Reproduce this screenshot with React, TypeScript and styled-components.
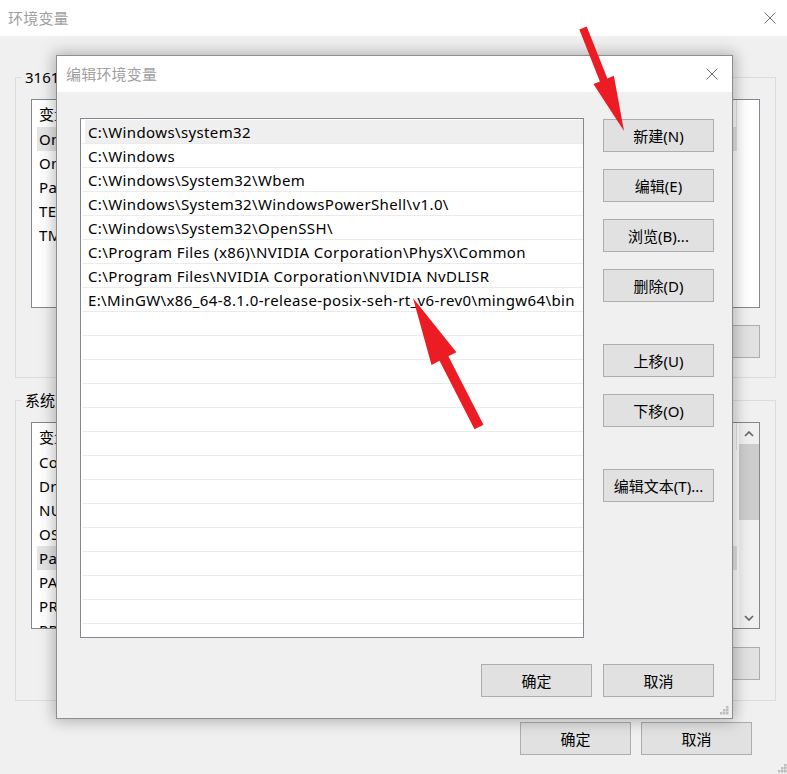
import React from "react";
import styled, { createGlobalStyle } from "styled-components";

const UI_FONT = `"Noto Sans", "Noto Sans CJK SC", sans-serif`;

const GlobalStyle = createGlobalStyle`
  html, body { margin: 0; padding: 0; }
  body {
    width: 787px;
    height: 774px;
    overflow: hidden;
    background: #f0f0f0;
    font-family: ${UI_FONT};
    font-size: 15px;
    color: #000;
  }
  * { box-sizing: border-box; }
`;

/* ---------- shared window parts ---------- */

const TitleBar = styled.div<{ $padL: number; $padR: number }>`
  height: 36px;
  flex: none;
  background: #fff;
  display: flex;
  align-items: center;
  justify-content: space-between;
  padding: 0 ${(p) => p.$padR}px 0 ${(p) => p.$padL}px;
`;

const TitleText = styled.span`
  font-size: 15px;
  line-height: 20px;
  color: #a0a0a0;
  letter-spacing: 0.2px;
`;

const CloseIcon = () => (
  <svg width="12" height="12" viewBox="0 0 12 12">
    <path d="M0.5 0.5 L11.5 11.5 M11.5 0.5 L0.5 11.5" stroke="#6e6e6e" strokeWidth="1" fill="none" />
  </svg>
);

const Button = styled.button<{ $mt?: number }>`
  width: 111px;
  height: 33px;
  flex: none;
  margin: ${(p) => p.$mt ?? 0}px 0 0 0;
  padding: 0;
  background: #e1e1e1;
  border: 1px solid #adadad;
  font-family: ${UI_FONT};
  font-size: 15px;
  line-height: 20px;
  color: #000;
  display: flex;
  align-items: center;
  justify-content: center;
`;

const GripBox = styled.svg<{ $right: number; $bottom: number }>`
  position: absolute;
  right: ${(p) => p.$right}px;
  bottom: ${(p) => p.$bottom}px;
`;

const Grip = ({ right, bottom }: { right: number; bottom: number }) => (
  <GripBox $right={right} $bottom={bottom} width="10" height="10" viewBox="0 0 10 10">
    {[
      [7, 1],
      [4, 4],
      [7, 4],
      [1, 7],
      [4, 7],
      [7, 7],
    ].map(([x, y], i) => (
      <rect key={i} x={x} y={y} width="2.5" height="2.5" fill="#bdbdbd" />
    ))}
  </GripBox>
);

/* ---------- background window ---------- */

const Window = styled.div`
  position: relative;
  width: 787px;
  height: 774px;
  background: #f0f0f0;
  display: flex;
  flex-direction: column;
  overflow: hidden;
`;

const BgBody = styled.div`
  flex: 1;
  display: flex;
  flex-direction: column;
  padding: 0 11px 0 15px;
`;

const Group = styled.div<{ $mt: number }>`
  position: relative;
  margin-top: ${(p) => p.$mt}px;
  height: 301px;
  border: 1px solid #dcdcdc;
  padding: 21px 15px 0 15px;
  display: flex;
  flex-direction: column;
`;

const GroupLabel = styled.span`
  position: absolute;
  top: -11px;
  left: 6px;
  padding: 0 3px;
  background: #f0f0f0;
  font-size: 15px;
  line-height: 20px;
  color: #000;
  white-space: nowrap;
`;

const BgList = styled.div<{ $h: number }>`
  height: ${(p) => p.$h}px;
  flex: none;
  border: 1px solid #828790;
  background: #fff;
  display: flex;
  overflow: hidden;
`;

const BgListInner = styled.div`
  flex: 1;
  min-width: 0;
  display: flex;
  flex-direction: column;
  overflow: hidden;
`;

const BgHeader = styled.div`
  height: 27px;
  flex: none;
  width: 705px;
  display: flex;
  align-items: center;
  border-right: 1px solid #e5e5e5;
  padding-left: 7px;
  font-size: 15px;
`;

const BgRow = styled.div<{ $sel?: boolean }>`
  height: 24px;
  width: 705px;
  flex: none;
  display: flex;
  align-items: center;
  padding-left: 7px;
  font-size: 15px;
  letter-spacing: 0.35px;
  white-space: nowrap;
  background: ${(p) =>
    p.$sel ? "linear-gradient(to right, transparent 5px, #e5e5e5 5px)" : "transparent"};
`;

const NameCell = styled.span`
  width: 250px;
  flex: none;
  overflow: hidden;
  text-overflow: ellipsis;
  padding-right: 8px;
`;

const ValueCell = styled.span`
  flex: 1;
  min-width: 0;
  overflow: hidden;
  text-overflow: ellipsis;
`;

const Scrollbar = styled.div`
  width: 20px;
  flex: none;
  background: #f0f0f0;
  display: flex;
  flex-direction: column;
  align-items: stretch;
`;

const ScrollArrow = styled.div`
  height: 21px;
  flex: none;
  display: flex;
  align-items: center;
  justify-content: center;
`;

const ScrollTrack = styled.div`
  flex: 1;
  display: flex;
  flex-direction: column;
`;

const ScrollThumb = styled.div`
  height: 76px;
  background: #cdcdcd;
`;

const ButtonRow = styled.div<{ $mt: number; $gap: number }>`
  margin-top: ${(p) => p.$mt}px;
  display: flex;
  justify-content: flex-end;
  gap: ${(p) => p.$gap}px;
`;

const BgFooter = styled.div`
  margin-top: 21px;
  padding-right: 24px;
  display: flex;
  justify-content: flex-end;
  gap: 10px;
`;

const Chevron = ({ up }: { up?: boolean }) => (
  <svg width="10" height="6" viewBox="0 0 10 6">
    <path
      d={up ? "M1 5 L5 1 L9 5" : "M1 1 L5 5 L9 1"}
      stroke="#606060"
      strokeWidth="1.6"
      fill="none"
    />
  </svg>
);

/* ---------- dialog ---------- */

const Dialog = styled.div`
  position: absolute;
  left: 56px;
  top: 55px;
  width: 677px;
  height: 664px;
  border: 1px solid #8e8e8e;
  background: #f0f0f0;
  box-shadow: 0 0 14px 2px rgba(0, 0, 0, 0.28);
  display: flex;
  flex-direction: column;
`;

const DialogBody = styled.div`
  flex: 1;
  display: flex;
  flex-direction: column;
  padding: 26px 18px 0 23px;
`;

const DialogMain = styled.div`
  display: flex;
  gap: 19px;
`;

const PathList = styled.div`
  width: 504px;
  height: 520px;
  flex: none;
  border: 1px solid #828790;
  background: #fff;
  padding: 1px 0 0 1px;
  overflow: hidden;
  display: flex;
  flex-direction: column;
`;

const PathRow = styled.div<{ $sel?: boolean }>`
  height: 24px;
  flex: none;
  border-bottom: 1px solid #ebebeb;
  display: flex;
  align-items: center;
  padding-left: 6px;
  font-size: 15px;
  line-height: 20px;
  letter-spacing: 0.38px;
  white-space: nowrap;
  color: #000;
  background: ${(p) =>
    p.$sel ? "linear-gradient(to right, transparent 3px, #efefef 3px)" : "transparent"};
`;

const SideButtons = styled.div`
  padding-top: 1px;
  display: flex;
  flex-direction: column;
`;

const DialogFooter = styled.div`
  margin-top: 26px;
  display: flex;
  justify-content: flex-end;
  gap: 11px;
`;

/* ---------- red arrows ---------- */

const ArrowLayer = styled.svg`
  position: absolute;
  left: 0;
  top: 0;
  pointer-events: none;
`;

function arrowPoints(
  tx: number,
  ty: number,
  px: number,
  py: number,
  w: number,
  h: number,
  L: number
) {
  const dx = px - tx;
  const dy = py - ty;
  const len = Math.hypot(dx, dy);
  const ux = dx / len;
  const uy = dy / len;
  const nx = -uy;
  const ny = ux;
  const bx = px - ux * L;
  const by = py - uy * L;
  const pts = [
    [tx + nx * w, ty + ny * w],
    [bx + nx * w, by + ny * w],
    [bx + nx * h, by + ny * h],
    [px, py],
    [bx - nx * h, by - ny * h],
    [bx - nx * w, by - ny * w],
    [tx - nx * w, ty - ny * w],
  ];
  return pts.map(([x, y]) => `${x.toFixed(1)},${y.toFixed(1)}`).join(" ");
}

/* ---------- data ---------- */

const userVars: [string, string][] = [
  ["OneDrive", "C:\\Users\\31610\\OneDrive"],
  ["OneDriveConsumer", "C:\\Users\\31610\\OneDrive"],
  ["Path", "C:\\Users\\31610\\AppData\\Local\\Microsoft\\WindowsApps;"],
  ["TEMP", "C:\\Users\\31610\\AppData\\Local\\Temp"],
  ["TMP", "C:\\Users\\31610\\AppData\\Local\\Temp"],
];

const sysVars: [string, string][] = [
  ["ComSpec", "C:\\Windows\\system32\\cmd.exe"],
  ["DriverData", "C:\\Windows\\System32\\Drivers\\DriverData"],
  ["NUMBER_OF_PROCESSORS", "8"],
  ["OS", "Windows_NT"],
  ["Path", "C:\\Windows\\system32;C:\\Windows;"],
  ["PATHEXT", ".COM;.EXE;.BAT;.CMD;.VBS"],
  ["PROCESSOR_ARCHITECTURE", "AMD64"],
  ["PROCESSOR_IDENTIFIER", "Intel64 Family 6"],
  ["PROCESSOR_LEVEL", "6"],
];

const paths = [
  "C:\\Windows\\system32",
  "C:\\Windows",
  "C:\\Windows\\System32\\Wbem",
  "C:\\Windows\\System32\\WindowsPowerShell\\v1.0\\",
  "C:\\Windows\\System32\\OpenSSH\\",
  "C:\\Program Files (x86)\\NVIDIA Corporation\\PhysX\\Common",
  "C:\\Program Files\\NVIDIA Corporation\\NVIDIA NvDLISR",
  "E:\\MinGW\\x86_64-8.1.0-release-posix-seh-rt_v6-rev0\\mingw64\\bin",
];

const TOTAL_ROWS = 22;

const sideButtons: [string, number][] = [
  ["新建(N)", 0],
  ["编辑(E)", 17],
  ["浏览(B)...", 17],
  ["删除(D)", 17],
  ["上移(U)", 42],
  ["下移(O)", 17],
  ["编辑文本(T)...", 42],
];

export default function App() {
  const rows = Array.from({ length: TOTAL_ROWS }, (_, i) => paths[i] ?? "");
  return (
    <>
      <GlobalStyle />
      <Window>
        <TitleBar $padL={8} $padR={11}>
          <TitleText>环境变量</TitleText>
          <CloseIcon />
        </TitleBar>
        <BgBody>
          <Group $mt={41}>
            <GroupLabel>3161 的用户变量(U)</GroupLabel>
            <BgList $h={209}>
              <BgListInner>
                <BgHeader>
                  <NameCell>变量</NameCell>
                  <ValueCell>值</ValueCell>
                </BgHeader>
                {userVars.map(([n, v], i) => (
                  <BgRow key={n} $sel={i === 0}>
                    <NameCell>{n}</NameCell>
                    <ValueCell>{v}</ValueCell>
                  </BgRow>
                ))}
              </BgListInner>
            </BgList>
            <ButtonRow $mt={17} $gap={10}>
              <Button>新建(N)...</Button>
              <Button>编辑(E)...</Button>
              <Button>删除(D)</Button>
            </ButtonRow>
          </Group>
          <Group $mt={22}>
            <GroupLabel>系统变量(S)</GroupLabel>
            <BgList $h={207}>
              <BgListInner>
                <BgHeader>
                  <NameCell>变量</NameCell>
                  <ValueCell>值</ValueCell>
                </BgHeader>
                {sysVars.map(([n, v], i) => (
                  <BgRow key={n} $sel={i === 4}>
                    <NameCell>{n}</NameCell>
                    <ValueCell>{v}</ValueCell>
                  </BgRow>
                ))}
              </BgListInner>
              <Scrollbar>
                <ScrollArrow>
                  <Chevron up />
                </ScrollArrow>
                <ScrollTrack>
                  <ScrollThumb />
                </ScrollTrack>
                <ScrollArrow>
                  <Chevron />
                </ScrollArrow>
              </Scrollbar>
            </BgList>
            <ButtonRow $mt={18} $gap={10}>
              <Button>新建(W)...</Button>
              <Button>编辑(I)...</Button>
              <Button>删除(L)</Button>
            </ButtonRow>
          </Group>
          <BgFooter>
            <Button>确定</Button>
            <Button>取消</Button>
          </BgFooter>
        </BgBody>
        <Grip right={0} bottom={1} />

        <Dialog>
          <TitleBar $padL={9} $padR={14}>
            <TitleText>编辑环境变量</TitleText>
            <CloseIcon />
          </TitleBar>
          <DialogBody>
            <DialogMain>
              <PathList>
                {rows.map((p, i) => (
                  <PathRow key={i} $sel={i === 0}>
                    {p}
                  </PathRow>
                ))}
              </PathList>
              <SideButtons>
                {sideButtons.map(([label, mt]) => (
                  <Button key={label} $mt={mt}>
                    {label}
                  </Button>
                ))}
              </SideButtons>
            </DialogMain>
            <DialogFooter>
              <Button>确定</Button>
              <Button>取消</Button>
            </DialogFooter>
          </DialogBody>
          <Grip right={3} bottom={3} />
        </Dialog>

        <ArrowLayer width="787" height="774" viewBox="0 0 787 774">
          <polygon points={arrowPoints(583, 28, 624, 131, 4, 11, 55)} fill="#ec1c24" />
          <polygon points={arrowPoints(479, 427, 413, 298, 5, 14, 68)} fill="#ec1c24" />
        </ArrowLayer>
      </Window>
    </>
  );
}
